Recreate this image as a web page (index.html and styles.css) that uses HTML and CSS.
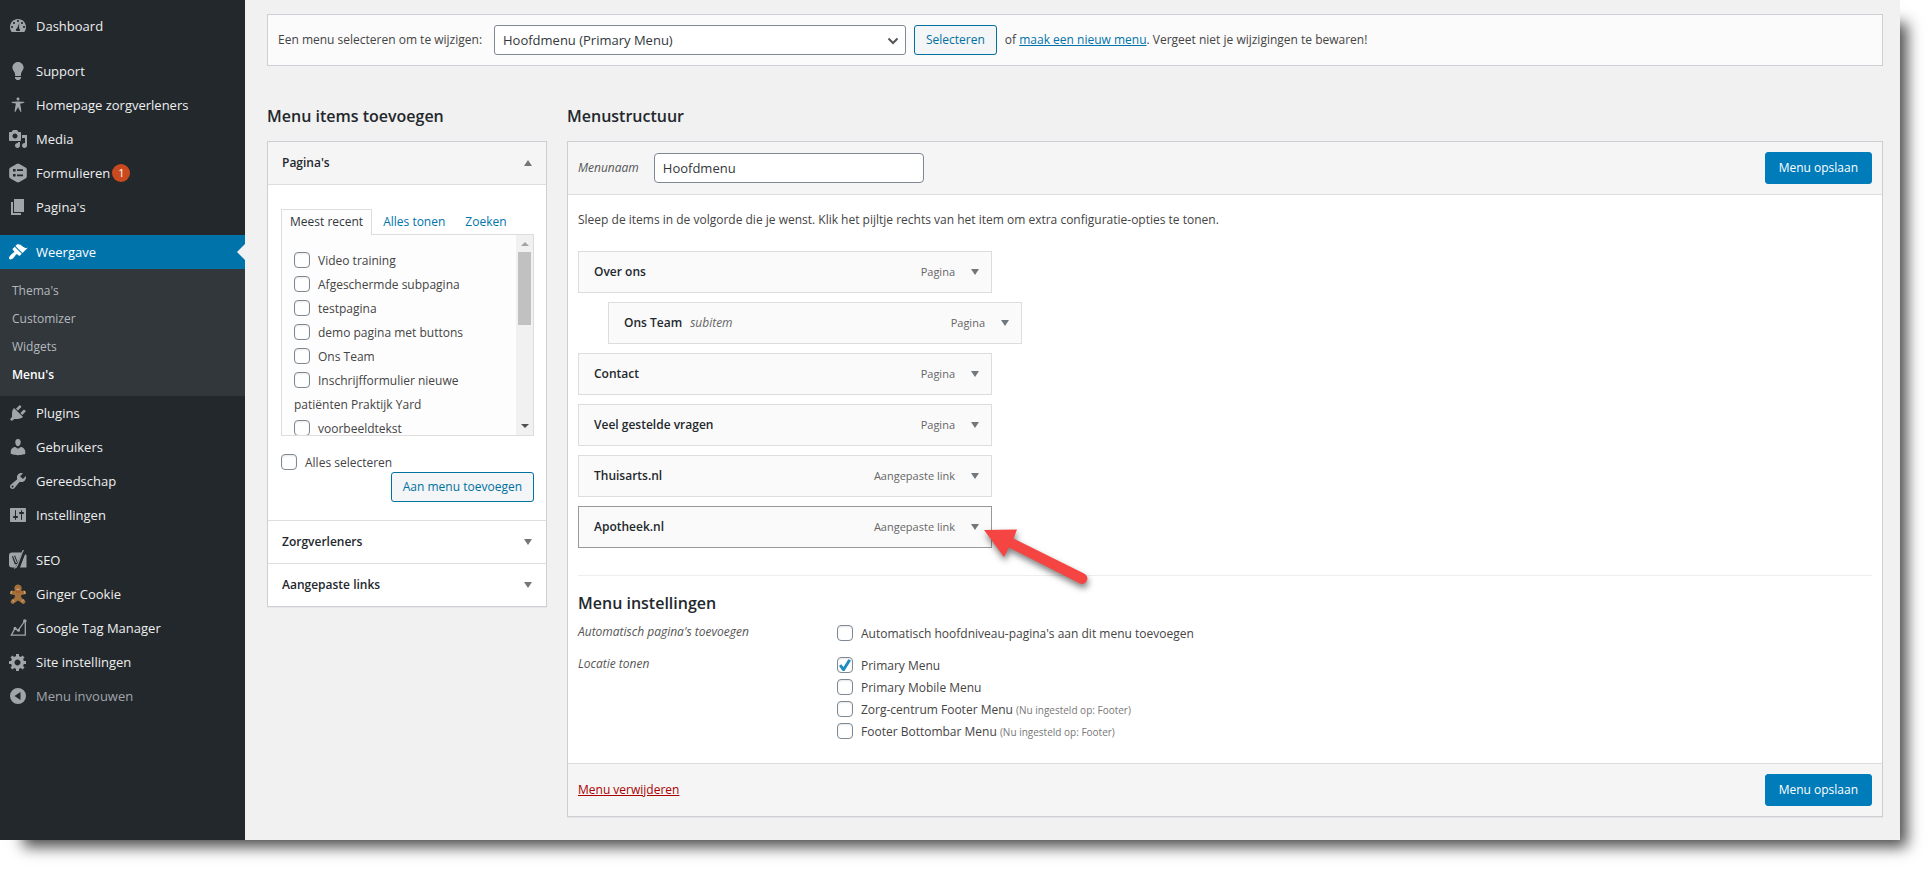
FILE: index.html
```html
<!DOCTYPE html>
<html lang="nl">
<head>
  <meta charset="UTF-8">
  <title>Menu's</title>
  <meta name="viewport" content="width=device-width, initial-scale=1.0">
  <link rel="stylesheet" href="styles.css">
</head>
<body>
<div class="scherm">

  <nav class="zijbalk">
    <ul class="hoofdmenu">
      <li><a href="#"><svg viewBox="0 0 20 20"><path fill-rule="evenodd" d="M3.76 16h12.48c1.1-1.37 1.76-3.11 1.76-5 0-4.42-3.58-8-8-8s-8 3.58-8 8c0 1.89.66 3.63 1.76 5zM10 4c.55 0 1 .45 1 1s-.45 1-1 1-1-.45-1-1 .45-1 1-1zM6 6c.55 0 1 .45 1 1s-.45 1-1 1-1-.45-1-1 .45-1 1-1zM14 6c.55 0 1 .45 1 1s-.45 1-1 1-1-.45-1-1 .45-1 1-1zM4 10c.55 0 1 .45 1 1s-.45 1-1 1-1-.45-1-1 .45-1 1-1zM16 10c.55 0 1 .45 1 1s-.45 1-1 1-1-.45-1-1 .45-1 1-1zM11.3 7l-.3 5.3c.6.3 1 .9 1 1.600 0 .5-.2.8-.5 1.100h-3c-.3-.3-.5-.7-.5-1.200 0-.8.500-1.400 1.200-1.600z"/></svg>Dashboard</a></li>
      <li class="ruimte"><a href="#"><svg viewBox="0 0 20 20"><path d="M10 1c3.11 0 5.63 2.52 5.63 5.62 0 1.84-2.03 4.58-2.03 4.58-.33.44-.6 1.25-.6 1.8v1c0 .55-.45 1-1 1H8c-.55 0-1-.45-1-1v-1c0-.55-.27-1.36-.6-1.8 0 0-2.02-2.74-2.02-4.58C4.38 3.52 6.89 1 10 1zM7 16.87V16h6v.87c0 .62-.13 1.13-.75 1.13H12c0 .62-.4 1-1.02 1h-2c-.61 0-.98-.38-.98-1h-.25c-.62 0-.75-.51-.75-1.13z"/></svg>Support</a></li>
      <li><a href="#"><svg viewBox="0 0 20 20"><path d="M10 2.6c.83 0 1.5.67 1.5 1.5s-.67 1.51-1.5 1.51c-.82 0-1.5-.68-1.5-1.51s.68-1.5 1.5-1.5zM3.4 7.36c0-.65 6.6-.76 6.6-.76s6.6.11 6.6.76-4.47 1.4-4.47 1.4 1.69 8.14 1.06 8.38c-.62.24-3.19-5.19-3.19-5.19s-2.56 5.43-3.18 5.19c-.63-.24 1.06-8.38 1.06-8.38S3.4 8.01 3.4 7.36z"/></svg>Homepage zorgverleners</a></li>
      <li><a href="#"><svg viewBox="0 0 20 20"><path fill-rule="evenodd" d="M13 11V4c0-.55-.45-1-1-1h-1.67L9 1H5L3.67 3H2c-.55 0-1 .45-1 1v7c0 .55.45 1 1 1h10c.55 0 1-.45 1-1zM7 4.5c1.38 0 2.5 1.12 2.5 2.5S8.38 9.5 7 9.5 4.5 8.38 4.5 7 5.62 4.5 7 4.5zM14 6h5v10.5c0 1.38-1.12 2.5-2.5 2.5S14 17.88 14 16.5s1.12-2.5 2.5-2.5c.17 0 .34.02.5.05V9h-3V6zm-4 8.05V13h2v3.5c0 1.38-1.12 2.5-2.5 2.5S7 17.88 7 16.5 8.12 14 9.5 14c.17 0 .34.02.5.05z"/></svg>Media</a></li>
      <li><a href="#"><svg viewBox="0 0 20 20"><path fill-rule="evenodd" d="M10 .5q.8 0 1.400.4l6.100 3.500q1.300.7 1.300 2v7.200q0 1.300-1.300 2l-6.100 3.500q-1.400.7-2.800 0l-6.100-3.500q-1.300-.7-1.300-2V6.400q0-1.300 1.300-2L8.600.9Q9.200.5 10 .5zM5 6v2.600h2.600V6zM9 6.300v1.700h6V6.300zM5 11v2.600h2.600V11zM9 11.500v1.700h6v-1.700z"/></svg>Formulieren<span class="teller">1</span></a></li>
      <li><a href="#"><svg viewBox="0 0 20 20"><path d="M6 15V2h10v13H6zm-1 1h8v2H3V5h2v11z"/></svg>Pagina's</a></li>
      <li class="ruimte actief"><a href="#"><svg viewBox="0 0 20 20"><path d="M14.48 11.06L7.41 3.99l1.5-1.5c.5-.56 2.3-.47 3.51.32 1.21.8 1.43 1.28 2.91 2.1 1.18.64 2.45 1.26 4.45.85zm-.71.71L6.7 4.7 4.93 6.47c-.39.39-.39 1.02 0 1.41l1.06 1.06c.39.39.39 1.03 0 1.42-.6.6-1.43 1.11-2.21 1.69-.35.26-.7.53-1.01.84C1.43 14.23.4 16.08 1.4 17.07c.99 1 2.84-.03 4.18-1.36.31-.31.58-.66.85-1.02.57-.78 1.08-1.61 1.69-2.21.39-.39 1.02-.39 1.41 0l1.06 1.06c.39.39 1.02.39 1.41 0z"/></svg>Weergave</a>
        <ul class="submenu">
          <li><a href="#">Thema's</a></li>
          <li><a href="#">Customizer</a></li>
          <li><a href="#">Widgets</a></li>
          <li><a href="#" class="huidig">Menu's</a></li>
        </ul>
      </li>
      <li><a href="#"><svg viewBox="0 0 20 20"><path d="M13.11 4.36L9.87 7.6 8 5.73l3.24-3.24c.35-.34 1.05-.2 1.56.32.52.51.66 1.21.31 1.55zm-8 1.77l.91-1.12 9.01 9.01-1.19.84c-.71.71-2.63 1.16-3.82 1.16H6.14L4.9 17.26c-.59.59-1.54.59-2.12 0-.59-.58-.59-1.53 0-2.12l1.24-1.24v-3.88c0-1.13.4-3.19 1.09-3.89zm7.26 3.97l3.24-3.24c.34-.35 1.04-.21 1.55.31.52.51.66 1.21.31 1.55l-3.24 3.25z"/></svg>Plugins</a></li>
      <li><a href="#"><svg viewBox="0 0 20 20"><path d="M10 9.25c-2.27 0-2.73-3.44-2.73-3.44C7 4.02 7.82 2 9.97 2c2.16 0 2.98 2.02 2.71 3.81 0 0-.41 3.44-2.68 3.44zm0 2.57L12.72 10c2.39 0 4.52 2.33 4.52 4.53v2.49s-3.65 1.13-7.24 1.13c-3.65 0-7.24-1.13-7.24-1.13v-2.49c0-2.25 1.94-4.48 4.47-4.48z"/></svg>Gebruikers</a></li>
      <li><a href="#"><svg viewBox="0 0 20 20"><path fill-rule="evenodd" d="M16.68 9.77c-1.34 1.34-3.3 1.67-4.95.99l-5.41 6.52c-.99.99-2.59.99-3.58 0s-.99-2.59 0-3.57l6.52-5.42c-.68-1.65-.35-3.61.99-4.95 1.28-1.28 3.12-1.62 4.72-1.06l-2.89 2.89 2.82 2.82 2.86-2.87c.53 1.58.18 3.39-1.08 4.65zM3.81 16.21c.4.39 1.04.39 1.43 0 .4-.4.4-1.04 0-1.43-.39-.4-1.03-.4-1.43 0-.39.39-.39 1.03 0 1.43z"/></svg>Gereedschap</a></li>
      <li><a href="#"><svg viewBox="0 0 20 20"><path fill-rule="evenodd" d="M18 16V4c0-.55-.45-1-1-1H3c-.55 0-1 .45-1 1v12c0 .55.45 1 1 1h14c.55 0 1-.45 1-1zM8 11h1c.55 0 1 .45 1 1s-.45 1-1 1H8v1.5c0 .28-.22.5-.5.5s-.5-.22-.5-.5V13H6c-.55 0-1-.45-1-1s.45-1 1-1h1V5.5c0-.28.22-.5.5-.5s.5.22.5.5V11zm5-2h-1c-.55 0-1-.45-1-1s.45-1 1-1h1V5.5c0-.28.22-.5.5-.5s.5.22.5.5V7h1c.55 0 1 .45 1 1s-.45 1-1 1h-1v5.5c0 .28-.22.5-.5.5s-.5-.22-.5-.5V9z"/></svg>Instellingen</a></li>
      <li class="ruimte"><a href="#"><svg viewBox="0 0 20 20"><path d="M4 2.500h12L10.600 17.500H4a3 3 0 0 1-3-3v-9a3 3 0 0 1 3-3z"/><path d="M17 4l1.500 1.500V17.500H12z"/><path d="M5.500 6l3 8M16.500.8L9.800 16.500q-1 2.300-3 2.200" fill="none" stroke="#23282d" stroke-width="3.400"/><path d="M5.500 6l3 7M16 .8h-1.200L9.300 15.500q-1 2.700-3.300 2.800" fill="none" stroke="#a0a5aa" stroke-width="1.100"/></svg>SEO</a></li>
      <li><a href="#"><svg viewBox="0 0 20 20"><path class="koek" d="M10 .5a3.600 3.600 0 0 1 3 5.700q.5.700 1 .7l1.500-.4a2 2 0 1 1 .7 4l-3 .5v2.500l3 2.400a2 2 0 1 1-2.500 3L10 16.500l-3.700 2.400a2 2 0 1 1-2.500-3l3-2.400V11l-3-.5a2 2 0 1 1 .7-4l1.500.4q.5 0 1-.7a3.600 3.600 0 0 1 3-5.700z"/><path class="glazuur" d="M3.500 7l-.6 3M16.500 7l.6 3M4.300 15.500l2 2.500M15.700 15.500l-2 2.500M8.500 5q1.500 1.200 3 0"/><path class="strik" d="M8.300 7l1.700.7 1.700-.7v2L10 8.300 8.300 9z"/></svg>Ginger Cookie</a></li>
      <li><a href="#"><svg viewBox="0 0 20 20"><path d="M17.300 4.500V17.200H3.300L7 10.500l3 2.200L16.800 3" fill="none" stroke="#a0a5aa" stroke-width="1.300"/><circle cx="16.800" cy="3" r="1.800"/><circle cx="7" cy="10.300" r="1.500"/><circle cx="10.500" cy="12.200" r="1.500"/></svg>Google Tag Manager</a></li>
      <li><a href="#"><svg viewBox="0 0 20 20"><path fill-rule="evenodd" d="M18 12h-2.18c-.17.7-.44 1.35-.81 1.93l1.54 1.54-2.1 2.1-1.54-1.54c-.58.36-1.23.63-1.91.79V19H8v-2.18c-.68-.16-1.33-.43-1.91-.79l-1.54 1.54-2.12-2.12 1.54-1.54c-.36-.58-.63-1.23-.79-1.91H1V9.03h2.17c.16-.7.44-1.35.8-1.94L2.43 5.55l2.1-2.1 1.54 1.54c.58-.37 1.24-.64 1.93-.81V2h3v2.18c.68.16 1.33.43 1.91.79l1.54-1.54 2.12 2.12-1.54 1.54c.36.59.64 1.24.8 1.94H18V12zm-8.500 1.500c1.660 0 3-1.340 3-3s-1.340-3-3-3-3 1.340-3 3 1.340 3 3 3z"/></svg>Site instellingen</a></li>
      <li><button type="button" class="invouwen"><svg viewBox="0 0 20 20"><path fill-rule="evenodd" d="M10 2a8 8 0 1 1 0 16 8 8 0 0 1 0-16zM12.500 6L6.500 10l6 4z"/></svg>Menu invouwen</button></li>
    </ul>
  </nav>

  <main class="inhoud">
    <form class="kiezer">
      <label for="menu-keuze">Een menu selecteren om te wijzigen:</label>
      <span class="keuze">
        <select id="menu-keuze"><option>Hoofdmenu (Primary Menu)</option></select>
        <svg viewBox="0 0 12 8"><path d="M1.500 1.500L6 6l4.500-4.500"/></svg>
      </span>
      <button type="button" class="knop">Selecteren</button>
      <span>of <a href="#">maak een nieuw menu</a>. Vergeet niet je wijzigingen te bewaren!</span>
    </form>

    <div class="kolommen">
      <section class="toevoegen">
        <h2>Menu items toevoegen</h2>
        <div class="vak">
          <button type="button" class="vak-kop open">Pagina's <span class="pijl omhoog"></span></button>
          <div class="vak-inhoud">
            <div class="tabs">
              <a href="#" class="tab gekozen">Meest recent</a>
              <a href="#" class="tab">Alles tonen</a>
              <a href="#" class="tab">Zoeken</a>
            </div>
            <div class="lijstvak">
              <ul class="lijst">
                <li><label><input type="checkbox">Video training</label></li>
                <li><label><input type="checkbox">Afgeschermde subpagina</label></li>
                <li><label><input type="checkbox">testpagina</label></li>
                <li><label><input type="checkbox">demo pagina met buttons</label></li>
                <li><label><input type="checkbox">Ons Team</label></li>
                <li><label><input type="checkbox">Inschrijfformulier nieuwe patiënten Praktijk Yard</label></li>
                <li><label><input type="checkbox">voorbeeldtekst</label></li>
              </ul>
              <div class="schuif"><span class="schuif-op"></span><span class="schuif-greep"></span><span class="schuif-neer"></span></div>
            </div>
            <label class="alles"><input type="checkbox">Alles selecteren</label>
            <button type="button" class="knop rechts">Aan menu toevoegen</button>
          </div>
          <button type="button" class="vak-kop">Zorgverleners <span class="pijl"></span></button>
          <button type="button" class="vak-kop">Aangepaste links <span class="pijl"></span></button>
        </div>
      </section>

      <section class="structuur">
        <h2>Menustructuur</h2>
        <form class="vak">
          <div class="balk">
            <label for="menunaam" class="cursief">Menunaam</label>
            <input type="text" id="menunaam" value="Hoofdmenu">
            <button type="button" class="knop primair">Menu opslaan</button>
          </div>
          <div class="bewerken">
            <p>Sleep de items in de volgorde die je wenst. Klik het pijltje rechts van het item om extra configuratie-opties te tonen.</p>
            <ul class="items">
              <li><strong>Over ons</strong><span class="soort">Pagina</span><span class="pijl"></span></li>
              <li class="sub"><strong>Ons Team</strong><em>subitem</em><span class="soort">Pagina</span><span class="pijl"></span></li>
              <li><strong>Contact</strong><span class="soort">Pagina</span><span class="pijl"></span></li>
              <li><strong>Veel gestelde vragen</strong><span class="soort">Pagina</span><span class="pijl"></span></li>
              <li><strong>Thuisarts.nl</strong><span class="soort">Aangepaste link</span><span class="pijl"></span></li>
              <li class="aangewezen"><strong>Apotheek.nl</strong><span class="soort">Aangepaste link</span><span class="pijl"></span>
                <svg class="rode-pijl" viewBox="0 0 110 70"><path d="M4 4L37 3.500 33.500 12.500 104 47.500A5.200 5.200 0 0 1 100 57.500L29 21.500 24 31z"/></svg>
              </li>
            </ul>
            <div class="instellingen">
              <h3>Menu instellingen</h3>
              <div class="rij">
                <span class="cursief">Automatisch pagina's toevoegen</span>
                <div class="opties">
                  <label><input type="checkbox">Automatisch hoofdniveau-pagina's aan dit menu toevoegen</label>
                </div>
              </div>
              <div class="rij">
                <span class="cursief">Locatie tonen</span>
                <div class="opties">
                  <label><input type="checkbox" checked>Primary Menu</label>
                  <label><input type="checkbox">Primary Mobile Menu</label>
                  <label><input type="checkbox">Zorg-centrum Footer Menu <small>(Nu ingesteld op: Footer)</small></label>
                  <label><input type="checkbox">Footer Bottombar Menu <small>(Nu ingesteld op: Footer)</small></label>
                </div>
              </div>
            </div>
          </div>
          <div class="balk onder">
            <a href="#" class="verwijderen">Menu verwijderen</a>
            <button type="button" class="knop primair">Menu opslaan</button>
          </div>
        </form>
      </section>
    </div>
  </main>

</div>
</body>
</html>
```
FILE: styles.css
```css
* {
  box-sizing: border-box;
}
body {
  margin: 0;
  background: #fff;
  color: #444;
  font: 12px/18px "Open Sans", "Noto Sans", sans-serif;
}
h2, h3, p, ul {
  margin: 0;
  padding: 0;
}
ul {
  list-style: none;
}
a {
  color: #0073aa;
}
button, input, select {
  font: inherit;
  margin: 0;
}
.scherm {
  display: flex;
  margin: 0 30px 30px 0;
  background: #f1f1f1;
  box-shadow: 15px 15px 14px -8px rgba(0, 0, 0, 0.7);
}

/* zijbalk */
.zijbalk {
  width: 245px;
  flex-shrink: 0;
  padding-top: 9px;
  background: #23282d;
}
.hoofdmenu > li > a, .invouwen {
  position: relative;
  display: flex;
  align-items: center;
  width: 100%;
  height: 34px;
  padding: 0 8px;
  gap: 8px;
  border: 0;
  background: none;
  color: #eee;
  font-size: 13px;
  text-decoration: none;
}
.hoofdmenu svg {
  width: 20px;
  height: 20px;
  flex-shrink: 0;
  fill: #a0a5aa;
}
.ruimte {
  margin-top: 11px;
}
.teller {
  width: 18px;
  height: 18px;
  margin-left: -6px;
  border-radius: 9px;
  background: #ca4a1f;
  color: #fff;
  font-size: 11px;
  text-align: center;
}
.hoofdmenu .actief > a {
  background: #0073aa;
  color: #fff;
}
.actief > a svg {
  fill: #fff;
}
.actief > a::after {
  content: "";
  position: absolute;
  right: 0;
  top: 9px;
  border: 8px solid transparent;
  border-left: 0;
  border-right-color: #f1f1f1;
}
.submenu {
  padding: 8px 0 7px;
  background: #32373c;
}
.submenu a {
  display: block;
  padding: 5px 12px;
  color: #b4b9be;
  text-decoration: none;
}
.submenu .huidig {
  color: #fff;
  font-weight: 600;
}
.hoofdmenu .invouwen {
  color: #a0a5aa;
}
.koek {
  fill: #a5713b;
}
.glazuur {
  fill: none;
  stroke: #d9b48a;
}
.strik {
  fill: #b5442c;
}

/* inhoud */
.inhoud {
  flex: 1;
  padding: 14px 17px 23px 22px;
}
.kiezer {
  display: flex;
  align-items: center;
  gap: 8px;
  height: 52px;
  padding: 0 10px;
  border: 1px solid #ccd0d4;
  background: #fbfbfb;
}
.kiezer label {
  min-width: 208px;
}
.keuze {
  position: relative;
}
.keuze select {
  appearance: none;
  width: 412px;
  height: 30px;
  padding: 0 8px;
  border: 1px solid #7e8993;
  border-radius: 3px;
  background: #fff;
  color: #32373c;
  font-size: 13px;
}
.keuze svg {
  position: absolute;
  right: 7px;
  top: 12px;
  width: 12px;
  height: 8px;
  fill: none;
  stroke: #555;
  stroke-width: 2;
}
.knop {
  height: 30px;
  padding: 0 11px;
  border: 1px solid #0071a1;
  border-radius: 3px;
  background: #f3f5f6;
  color: #0071a1;
}
.knop.primair {
  height: 32px;
  margin-left: auto;
  padding: 0 13px;
  background: #007cba;
  border-color: #007cba;
  color: #fff;
}
.kolommen {
  display: flex;
  align-items: flex-start;
  gap: 20px;
  margin-top: 38px;
}
.toevoegen {
  width: 280px;
  flex-shrink: 0;
}
.structuur {
  flex: 1;
}
h2, h3 {
  color: #23282d;
  font-size: 16px;
  line-height: 24px;
  font-weight: 600;
}
h2 {
  margin-bottom: 13px;
}
.vak {
  border: 1px solid #ccd0d4;
  background: #fff;
  box-shadow: 0 1px 1px rgba(0, 0, 0, 0.04);
}
.vak-kop {
  display: flex;
  align-items: center;
  justify-content: space-between;
  width: 100%;
  height: 43px;
  padding: 0 14px;
  border: 0;
  border-top: 1px solid #ddd;
  background: #fff;
  color: #23282d;
  font-weight: 600;
}
.vak-kop.open {
  border-top: 0;
  border-bottom: 1px solid #ddd;
  background: #f5f5f5;
}
.pijl {
  width: 8px;
  border: 4px solid transparent;
  border-top: 6px solid #72777c;
  border-bottom: 0;
}
.pijl.omhoog {
  border-top: 0;
  border-bottom: 6px solid #72777c;
}
.vak-inhoud {
  display: flex;
  flex-direction: column;
  padding: 24px 12px 18px 13px;
}
.tabs {
  display: flex;
  gap: 2px;
}
.tab {
  padding: 3px 8px;
  border: 1px solid transparent;
  border-bottom: 0;
  text-decoration: none;
}
.tab.gekozen {
  position: relative;
  margin-bottom: -1px;
  border-color: #ddd;
  background: #fdfdfd;
  color: #32373c;
}
.lijstvak {
  display: flex;
  height: 202px;
  overflow: hidden;
  border: 1px solid #ddd;
  background: #fdfdfd;
}
.lijst {
  flex: 1;
  padding: 14px 12px;
  line-height: 24px;
}
input[type="checkbox"] {
  appearance: none;
  width: 16px;
  height: 16px;
  margin: -3px 8px 0 0;
  border: 1px solid #7e8993;
  border-radius: 4px;
  background: #fff;
  box-shadow: inset 0 1px 2px rgba(0, 0, 0, 0.1);
  vertical-align: middle;
}
input[type="checkbox"]:checked::before {
  content: "";
  display: block;
  width: 12px;
  height: 12px;
  margin: 1px;
  background: #1e8cbe;
  clip-path: polygon(0 55%, 18% 42%, 38% 64%, 78% 0, 100% 10%, 44% 100%, 32% 100%);
}
.schuif {
  display: flex;
  flex-direction: column;
  align-items: center;
  width: 17px;
  background: #f1f1f1;
}
.schuif-op, .schuif-neer {
  border: 4px solid transparent;
}
.schuif-op {
  margin-top: 3px;
  border-bottom-color: #a3a3a3;
}
.schuif-greep {
  width: 13px;
  height: 73px;
  margin-top: 6px;
  background: #c1c1c1;
}
.schuif-neer {
  margin: auto 0 3px;
  border-top-color: #505050;
}
.alles {
  margin-top: 18px;
}
.knop.rechts {
  align-self: flex-end;
}

/* menustructuur */
.balk {
  display: flex;
  align-items: center;
  height: 53px;
  padding: 0 10px;
  border-bottom: 1px solid #ddd;
  background: #f5f5f5;
}
.balk.onder {
  border-top: 1px solid #ddd;
  border-bottom: 0;
}
.cursief {
  color: #555;
  font-style: italic;
}
#menunaam {
  width: 270px;
  height: 30px;
  margin-left: 15px;
  padding: 0 8px;
  border: 1px solid #7e8993;
  border-radius: 4px;
  background: #fff;
  color: #32373c;
  font-size: 13px;
}
.bewerken {
  padding: 16px 10px 20px;
}
.items {
  display: flex;
  flex-direction: column;
  gap: 9px;
  margin-top: 22px;
}
.items li {
  position: relative;
  display: flex;
  align-items: center;
  width: 414px;
  height: 42px;
  padding: 0 12px 0 15px;
  border: 1px solid #ddd;
  background: #fafafa;
}
.items .sub {
  margin-left: 30px;
}
.items .aangewezen {
  border-color: #999;
}
.items strong {
  color: #23282d;
  font-weight: 600;
}
.items em {
  margin-left: 8px;
  color: #666;
}
.soort {
  margin-left: auto;
  margin-right: 16px;
  color: #666;
  font-size: 11px;
}
.rode-pijl {
  position: absolute;
  left: 401px;
  top: 19px;
  width: 110px;
  height: 70px;
  fill: #f44542;
  filter: drop-shadow(1px 4px 3px rgba(0, 0, 0, 0.5));
}
.instellingen {
  margin-top: 27px;
  padding-top: 15px;
  border-top: 1px solid #eee;
}
.rij {
  display: flex;
  margin-top: 8px;
}
.rij > .cursief {
  width: 259px;
}
.opties {
  display: flex;
  flex-direction: column;
}
.opties label {
  line-height: 22px;
}
.rij + .rij {
  margin-top: 10px;
}
small {
  color: #777;
  font-size: 10px;
}
.verwijderen {
  color: #a00;
}
```
